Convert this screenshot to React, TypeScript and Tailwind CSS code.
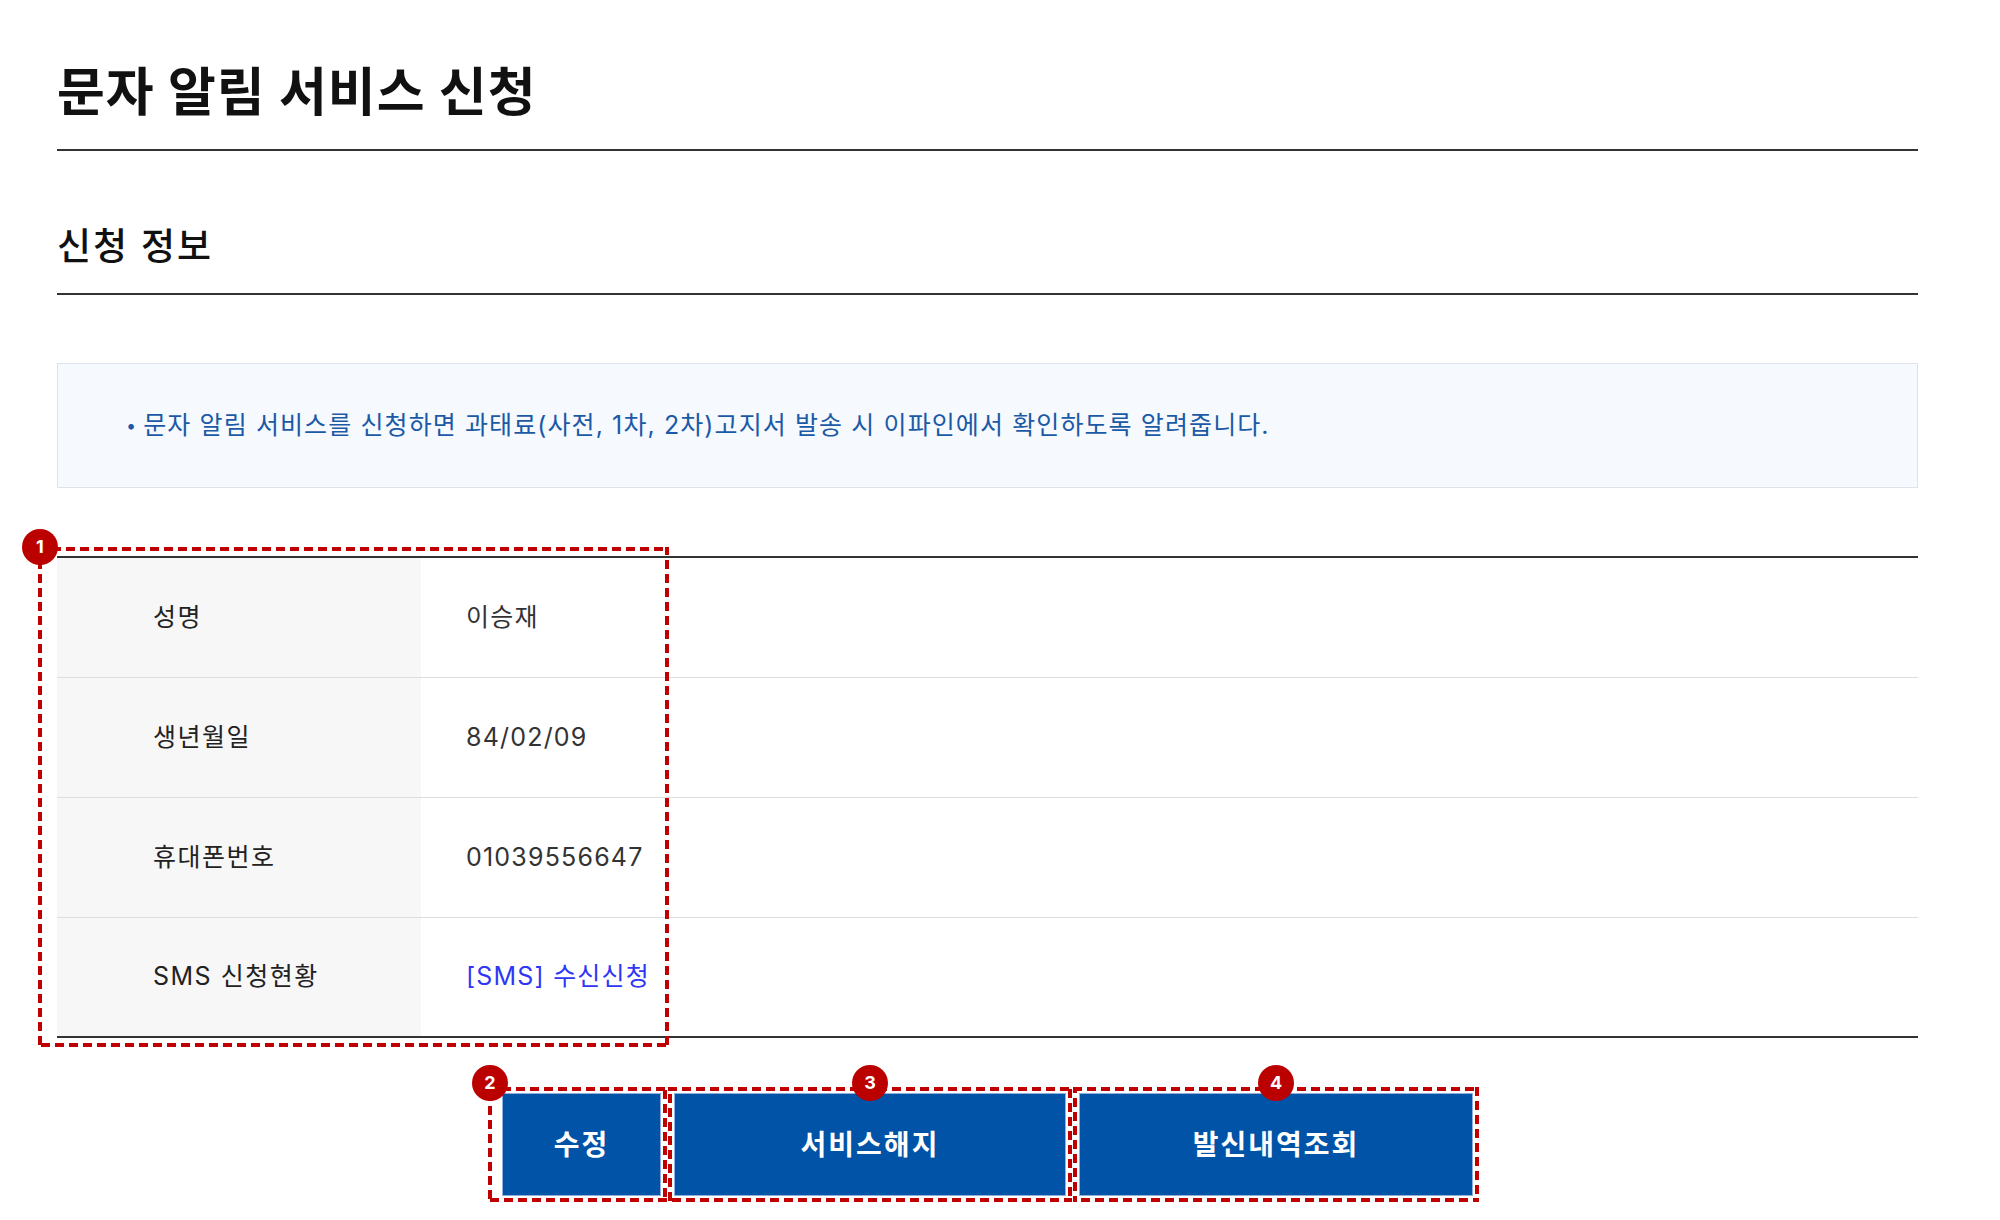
import React from 'react';

const font = { fontFamily: 'Inter, "Noto Sans CJK KR", sans-serif' };

const rows = [
  { label: '성명', value: '이승재' },
  { label: '생년월일', value: '84/02/09' },
  { label: '휴대폰번호', value: '01039556647' },
  { label: 'SMS 신청현황', value: '[SMS] 수신신청', link: true },
];

const Badge = ({ n, className }: { n: number; className: string }) => (
  <span
    className={`absolute z-10 flex h-[36px] w-[36px] items-center justify-center rounded-full bg-[#bb0000] text-[18px] font-bold leading-none text-white ${className}`}
  >
    {n}
  </span>
);

// red dashed annotation frame, drawn over its box
const Dashes = () => (
  <svg className="pointer-events-none absolute inset-0 h-full w-full" fill="none">
    <rect x="0" y="0" width="100%" height="100%" stroke="#c00000" strokeWidth="8" strokeDasharray="9 5" />
  </svg>
);

const buttonClass =
  'flex h-[103px] items-center justify-center border border-[#8fb0da] bg-[#0053a6] text-[28px] font-bold tracking-[2px] text-white';

const App = () => {
  return (
    <div className="min-h-[1220px] bg-white text-[#222]" style={font}>
      <div className="ml-[57px] w-[1861px] pt-[63px]">
        <h1 className="border-b-2 border-[#333] pb-[26px] text-[52px] font-bold leading-[60px] tracking-[1px] text-[#111]">
          문자 알림 서비스 신청
        </h1>

        <h2 className="mt-[74px] border-b-2 border-[#333] pb-[24px] text-[37px] font-medium leading-[44px] tracking-[2px] text-[#111]">
          신청 정보
        </h2>

        <div className="mt-[68px] flex h-[125px] items-center border border-[#dde3ea] bg-[#f6f9fd] pl-[68px] text-[25px] tracking-[1.1px] text-[#1b5aa6]">
          <span className="mr-[6px] text-[18px]">•</span>
          <span>
            문자 알림 서비스를 신청하면 과태료(사전, 1차, 2차)고지서 발송 시 이파인에서 확인하도록 알려줍니다.
          </span>
        </div>

        <div className="relative mt-[68px]">
          <div className="border-t-2 border-[#333]">
            {rows.map((row, i) => (
              <div
                key={row.label}
                className={`flex h-[120px] items-stretch ${
                  i === rows.length - 1 ? 'border-b-2 border-[#333]' : 'border-b border-[#dedede]'
                }`}
              >
                <div className="flex w-[364px] items-center bg-[#f7f7f7] pl-[96px] text-[25px] tracking-[1.5px] text-[#222]">
                  {row.label}
                </div>
                <div
                  className={`flex items-center pl-[45px] text-[25px] tracking-[1.2px] ${
                    row.link ? 'text-[#2f36f5]' : 'text-[#333]'
                  }`}
                >
                  {row.value}
                </div>
              </div>
            ))}
          </div>
          <div className="pointer-events-none absolute left-[-19px] top-[-9px] h-[500px] w-[631px]">
            <Dashes />
            <Badge n={1} className="left-[-16px] top-[-18px]" />
          </div>
        </div>

        <div className="mt-[49px] ml-[431px] flex gap-[1px]">
          <div className="relative py-[6px] pl-[14px] pr-[6px]">
            <Dashes />
            <Badge n={2} className="left-[-16px] top-[-22px]" />
            <button className={`${buttonClass} w-[159px]`}>수정</button>
          </div>
          <div className="relative p-[6px]">
            <Dashes />
            <Badge n={3} className="left-1/2 top-[-22px] -translate-x-1/2" />
            <button className={`${buttonClass} w-[392px]`}>서비스해지</button>
          </div>
          <div className="relative p-[6px]">
            <Dashes />
            <Badge n={4} className="left-1/2 top-[-22px] -translate-x-1/2" />
            <button className={`${buttonClass} w-[394px]`}>발신내역조회</button>
          </div>
        </div>
      </div>
    </div>
  );
};

export default App;
